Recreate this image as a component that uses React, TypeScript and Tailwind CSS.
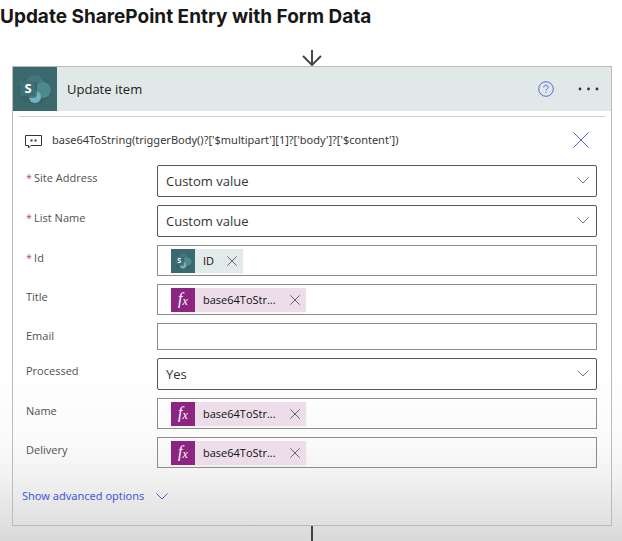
import { useState, type ReactNode } from "react";

const fieldBox = "flex min-w-0 flex-1 items-center border border-[#8c8c8c]";

function SharePointLogo({ className }: { className: string }) {
  return (
    <svg viewBox="0 0 44 44" className={className} aria-hidden="true">
      <rect width="44" height="44" fill="#3b696d" />
      <ellipse cx="22" cy="23" rx="17" ry="14" fill="#30585c" opacity="0.35" />
      <circle cx="22" cy="18" r="10" fill="#42777b" />
      <circle cx="30" cy="23" r="8" fill="#4d888c" />
      <circle cx="22" cy="30" r="6" fill="#72b3bf" />
      <path d="M9 15h15v12c0 2-1 4-3 4h-5v-2H9z" fill="#2e555a" opacity="0.6" />
      <rect x="7" y="14" width="15" height="15" rx="1" fill="#3d7074" />
      <text
        x="15"
        y="26"
        textAnchor="middle"
        fontSize="13"
        fontWeight="700"
        fontFamily="Open Sans, sans-serif"
        fill="#ffffff"
      >
        S
      </text>
    </svg>
  );
}

function Chevron({ className }: { className: string }) {
  return (
    <svg viewBox="0 0 12 7" className={className} fill="none" stroke="currentColor" aria-hidden="true">
      <path d="M.5.5 6 6 11.5.5" />
    </svg>
  );
}

function Cross({ className }: { className: string }) {
  return (
    <svg viewBox="0 0 16 16" className={className} fill="none" stroke="currentColor" aria-hidden="true">
      <path d="M.5.5l15 15M15.5.5l-15 15" vectorEffect="non-scaling-stroke" />
    </svg>
  );
}

function Row({ id, label, required, children }: { id: string; label: string; required?: boolean; children: ReactNode }) {
  return (
    <div className="flex items-start">
      <label htmlFor={id} className="flex w-[131px] shrink-0 gap-0.5 pt-1 text-[11px] leading-[18px] text-[#505050]">
        {required && <span className="text-[#c4514f]">*</span>}
        {label}
      </label>
      {children}
    </div>
  );
}

function SelectRow({ id, label, value, required }: { id: string; label: string; value: string; required?: boolean }) {
  return (
    <Row id={id} label={label} required={required}>
      <div className="relative min-w-0 flex-1">
        <select
          id={id}
          className="block h-8 w-full appearance-none rounded-xs border border-[#555555] px-2 pt-0.5 text-[13px] text-[#333333]"
        >
          <option>{value}</option>
        </select>
        <Chevron className="pointer-events-none absolute top-3 right-2 h-[7px] w-3 text-[#6f757c]" />
      </div>
    </Row>
  );
}

function TokenRow({ id, label, kind, required }: { id: string; label: string; kind: "id" | "fx"; required?: boolean }) {
  const [shown, setShown] = useState(true);
  return (
    <Row id={id} label={label} required={required}>
      <div className={`${fieldBox} h-[31px] pt-px pl-[13px]`}>
        {shown && (
          <span
            className={`flex h-6 shrink-0 items-center text-[11px] text-[#101010] shadow-xs ${
              kind === "id" ? "w-[72px] bg-[#e3eaea]" : "w-[135px] bg-[#ecdde9]"
            }`}
          >
            {kind === "id" ? (
              <SharePointLogo className="size-6 shrink-0" />
            ) : (
              <span className="flex size-6 shrink-0 items-center justify-center bg-[#8c2581] pb-0.5 font-['Liberation_Serif',serif] text-base text-white italic">
                f<small className="pt-1 text-xs">x</small>
              </span>
            )}
            <span className="flex-1 pl-2">{kind === "id" ? "ID" : "base64ToStr..."}</span>
            <button type="button" aria-label={`Remove ${label} value`} className="mr-1.5" onClick={() => setShown(false)}>
              <Cross className="size-[10px] text-[#62666b]" />
            </button>
          </span>
        )}
        <input id={id} type="text" className="h-full w-0 min-w-0 flex-1 px-1 text-[11px] outline-none" />
      </div>
    </Row>
  );
}

export default function App() {
  return (
    <main className="flex min-h-screen flex-col bg-[linear-gradient(to_bottom,#ffffff_0%,#ffffff_68%,#fafafa_82%,#f2f2f2_88%,#d9d9d9_100%)] font-['Open_Sans','Noto_Sans',sans-serif]">
      <h1 className="pt-1 font-['Inter',sans-serif] text-[19px] leading-[26px] font-bold text-[#171717]">
        Update SharePoint Entry with Form Data
      </h1>

      <div className="mt-5 flex flex-1 flex-col pr-2.5 pl-3">
        <svg viewBox="0 0 20 16" className="h-4 w-5 self-center" fill="none" stroke="#484848" strokeWidth="2" aria-hidden="true">
          <path d="M10 0v15M1 6l9 9 9-9" />
        </svg>

        <section className="border border-[#b9bcbb]">
          <header className="flex h-11 items-center bg-[#e0e8e8]">
            <SharePointLogo className="size-11" />
            <h2 className="flex-1 pt-0.5 pl-2.5 text-[13px] text-[#202020]">Update item</h2>
            <button type="button" aria-label="Help" className="mr-6">
              <svg viewBox="0 0 16 16" className="size-4" fill="none" stroke="#5b68e2" aria-hidden="true">
                <circle cx="8" cy="8" r="7.3" />
                <path d="M5.8 6.5C5.8 5 6.7 4.2 8 4.2s2.200.8 2.200 2c0 1.500-2.200 1.700-2.200 3.500M8 10.900v1.200" />
              </svg>
            </button>
            <button type="button" aria-label="More actions" className="mr-3">
              <svg viewBox="0 0 21 4" className="h-1 w-[21px]" fill="#333333" aria-hidden="true">
                <circle cx="2" cy="2" r="1.400" />
                <circle cx="10.500" cy="2" r="1.400" />
                <circle cx="19" cy="2" r="1.400" />
              </svg>
            </button>
          </header>

          <div className="mx-1.5 mt-[5px] border-t border-[#cfcfcf]" />

          <div className="mb-0.5 flex h-[46px] items-center pr-[22px] pl-3">
            <svg viewBox="0 0 17 15" className="mt-0.5 h-[15px] w-[17px]" fill="none" stroke="#333333" aria-hidden="true">
              <path d="M.5 1.500h16v10H6L3.500 14v-2.500h-3z" />
              <path d="M5.500 6.500h2M9.500 6.500h2" strokeWidth="2" />
            </svg>
            <p className="min-w-0 flex-1 truncate pl-2.5 font-['Noto_Sans',sans-serif] text-[11px] text-[#383838]">
              {"base64ToString(triggerBody()?['$multipart'][1]?['body']?['$content'])"}
            </p>
            <button type="button" aria-label="Dismiss comment">
              <Cross className="size-4 text-[#5262df]" />
            </button>
          </div>

          <form className="flex flex-col gap-2 pr-3.5 pl-[13px]">
            <SelectRow id="site" label="Site Address" value="Custom value" required />
            <SelectRow id="list" label="List Name" value="Custom value" required />
            <TokenRow id="item" label="Id" kind="id" required />
            <TokenRow id="title" label="Title" kind="fx" />
            <Row id="email" label="Email">
              <input id="email" type="text" className={`${fieldBox} h-[27px] px-2 text-[11px]`} />
            </Row>
            <SelectRow id="processed" label="Processed" value="Yes" />
            <TokenRow id="name" label="Name" kind="fx" />
            <TokenRow id="delivery" label="Delivery" kind="fx" />
          </form>

          <button
            type="button"
            className="mt-[18px] mb-[19px] ml-[9px] flex items-center gap-3 font-['Noto_Sans',sans-serif] text-[11px] leading-5 text-[#4459d8]"
          >
            Show advanced options
            <Chevron className="h-[7px] w-3" />
          </button>
        </section>

        <div className="w-0.5 flex-1 self-center bg-[#424242]" />
      </div>
    </main>
  );
}
